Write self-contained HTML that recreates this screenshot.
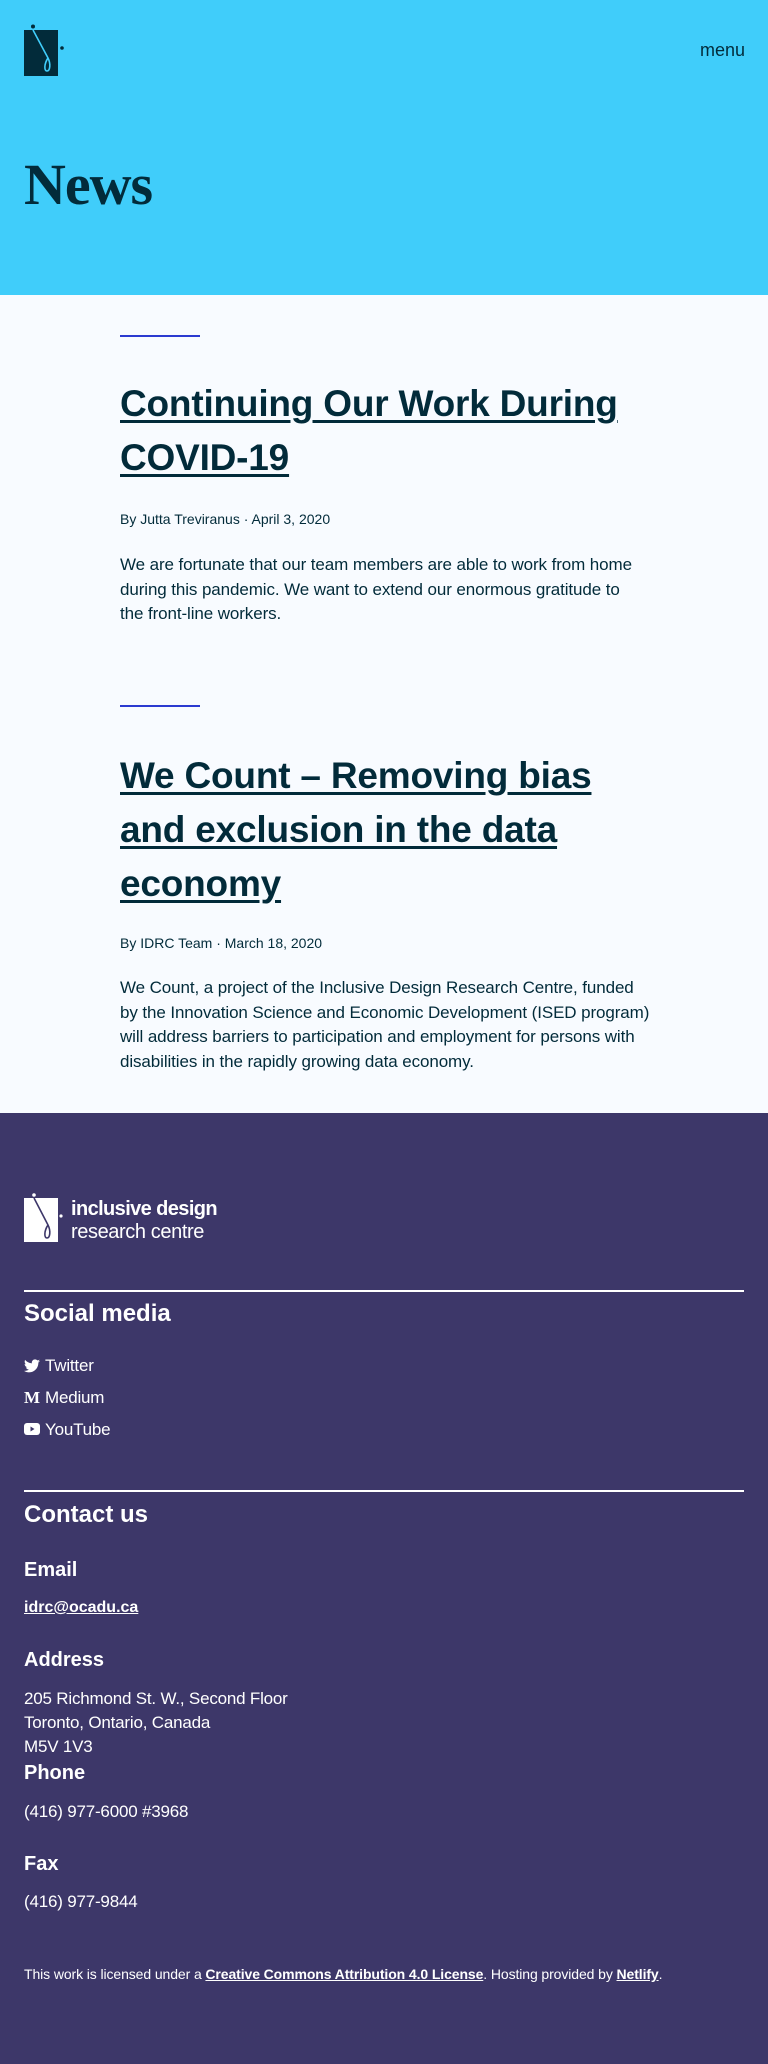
<!DOCTYPE html>
<html><head><meta charset="utf-8"><style>
*{margin:0;padding:0;box-sizing:border-box}
body{width:768px;height:2064px;position:relative;font-family:"Liberation Sans",sans-serif;background:#f8fbff;color:#022b3a;overflow:hidden}
.a{position:absolute;white-space:nowrap}
.hero{position:absolute;left:0;top:0;width:768px;height:295px;background:#40cdfa}
.foot{position:absolute;left:0;top:1113px;width:768px;height:951px;background:#3d3769;color:#fff}
.rule{position:absolute;left:120px;width:80px;height:2px;background:#2b3ad0}
.t{font-weight:bold;font-size:37px;line-height:54px;text-decoration:underline;text-decoration-thickness:3px;text-underline-offset:4px;letter-spacing:-0.2px}
.by{font-size:14px;line-height:20px}
.p{font-size:17px;line-height:24.5px;letter-spacing:-0.1px}
.wr{position:absolute;left:24px;width:720px;height:2px;background:#fff}
.h2{font-weight:bold;font-size:24px;line-height:30px}
.h3{font-weight:bold;font-size:20px;line-height:26px}
.f{font-size:17px;line-height:24px;letter-spacing:-0.2px}
</style></head><body>
<div class="hero"></div>
<svg class="a" style="left:24px;top:24px" width="40" height="52" viewBox="0 0 40 52">
<rect x="0" y="6" width="34" height="46" fill="#022b3a"/>
<circle cx="9" cy="2.5" r="2" fill="#022b3a"/>
<circle cx="38" cy="24" r="1.8" fill="#022b3a"/>
<path d="M9 6 L24 34 C27 40 26 47 23 47 C20 47 20 40 24 34" stroke="#40cdfa" stroke-width="1.6" fill="none"/>
</svg>
<div class="a" style="left:700px;top:38px;font-size:18px;line-height:24px">menu</div>
<div class="a" style="left:24px;top:152px;font-family:'Liberation Serif',serif;font-weight:bold;font-size:58px;line-height:66px;letter-spacing:-1px">News</div>

<div class="rule" style="top:335px"></div>
<div class="a t" style="left:120px;top:377px">Continuing Our Work During</div>
<div class="a t" style="left:120px;top:431px">COVID-19</div>
<div class="a by" style="left:120px;top:509px">By Jutta Treviranus · April 3, 2020</div>
<div class="a p" style="left:120px;top:553px">We are fortunate that our team members are able to work from home<br>during this pandemic. We want to extend our enormous gratitude to<br>the front-line workers.</div>

<div class="rule" style="top:705px"></div>
<div class="a t" style="left:120px;top:749px">We Count – Removing bias</div>
<div class="a t" style="left:120px;top:803px">and exclusion in the data</div>
<div class="a t" style="left:120px;top:857px">economy</div>
<div class="a by" style="left:120px;top:933px">By IDRC Team · March 18, 2020</div>
<div class="a p" style="left:120px;top:976px">We Count, a project of the Inclusive Design Research Centre, funded<br>by the Innovation Science and Economic Development (ISED program)<br>will address barriers to participation and employment for persons with<br>disabilities in the rapidly growing data economy.</div>

<div class="foot"></div>
<svg class="a" style="left:24px;top:1193px" width="40" height="50" viewBox="0 0 40 50">
<rect x="0" y="5" width="34" height="44" fill="#fff"/>
<circle cx="10" cy="2" r="1.8" fill="#fff"/>
<circle cx="37" cy="23" r="1.6" fill="#fff"/>
<path d="M10 5 L24 32 C27 38 26 45 23 45 C20 45 20 38 24 32" stroke="#3d3769" stroke-width="1.6" fill="none"/>
</svg>
<div class="a" style="left:71px;top:1197px;color:#fff;font-size:20px;line-height:24px;font-weight:bold;letter-spacing:-0.6px">inclusive design</div>
<div class="a" style="left:71px;top:1220px;color:#fff;font-size:20px;line-height:24px;letter-spacing:-0.4px">research centre</div>
<div class="wr" style="top:1290px"></div>
<div class="a h2" style="left:24px;top:1299px;color:#fff">Social media</div>
<svg class="a" style="left:24px;top:1359px" width="16" height="14" viewBox="0 0 24 20"><path fill="#fff" d="M24 2.4c-.9.4-1.8.6-2.8.8 1-.6 1.8-1.6 2.2-2.7-1 .6-2 1-3.1 1.2C19.4.7 18.1 0 16.6 0c-2.7 0-4.9 2.200-4.9 4.9 0 .4 0 .8.1 1.1C7.7 5.8 4.1 3.9 1.7.9c-.4.7-.7 1.6-.7 2.5 0 1.7.9 3.2 2.2 4.1-.8 0-1.600-.2-2.200-.6v.1c0 2.4 1.7 4.4 3.9 4.8-.4.1-.8.2-1.3.2-.3 0-.6 0-.9-.1.6 2 2.4 3.4 4.6 3.4-1.7 1.3-3.8 2.1-6.1 2.1-.4 0-.8 0-1.2-.1 2.2 1.4 4.8 2.2 7.5 2.2 9.1 0 14-7.500 14-14v-.6c1-.7 1.800-1.600 2.500-2.500z"/></svg>
<div class="a f" style="left:45px;top:1354px;color:#fff">Twitter</div>
<div class="a" style="left:24px;top:1388px;color:#fff;font-family:'Liberation Serif',serif;font-weight:bold;font-size:17px;line-height:20px">M</div>
<div class="a f" style="left:45px;top:1386px;color:#fff">Medium</div>
<svg class="a" style="left:24px;top:1423px" width="16" height="13" viewBox="0 0 16 13"><rect width="16" height="12" rx="3" fill="#fff"/><path d="M6.5 3.5 L10.5 6 L6.5 8.5z" fill="#3d3769"/></svg>
<div class="a f" style="left:45px;top:1418px;color:#fff">YouTube</div>
<div class="wr" style="top:1490px"></div>
<div class="a h2" style="left:24px;top:1500px;color:#fff">Contact us</div>
<div class="a h3" style="left:24px;top:1557px;color:#fff">Email</div>
<div class="a" style="left:24px;top:1598px;color:#fff;font-weight:bold;font-size:16px;line-height:20px;text-decoration:underline">idrc@ocadu.ca</div>
<div class="a h3" style="left:24px;top:1647px;color:#fff">Address</div>
<div class="a f" style="left:24px;top:1687px;color:#fff">205 Richmond St. W., Second Floor<br>Toronto, Ontario, Canada<br>M5V 1V3</div>
<div class="a h3" style="left:24px;top:1760px;color:#fff">Phone</div>
<div class="a f" style="left:24px;top:1800px;color:#fff">(416) 977-6000 #3968</div>
<div class="a h3" style="left:24px;top:1851px;color:#fff">Fax</div>
<div class="a f" style="left:24px;top:1890px;color:#fff">(416) 977-9844</div>
<div class="a" style="left:24px;top:1965px;color:#fff;font-size:14px;line-height:18px;letter-spacing:-0.1px">This work is licensed under a <b style="text-decoration:underline">Creative Commons Attribution 4.0 License</b>. Hosting provided by <b style="text-decoration:underline">Netlify</b>.</div>
</body></html>
